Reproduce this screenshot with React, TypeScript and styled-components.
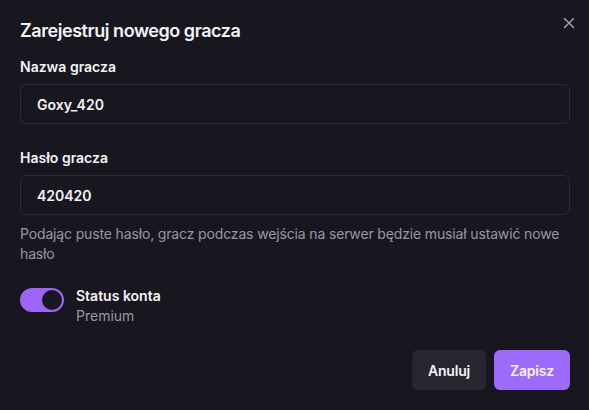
import styled, { createGlobalStyle } from "styled-components";

const GlobalStyle = createGlobalStyle`
    html, body {
        margin: 0;
        padding: 0;
        background: #18171f;
    }
    * {
        box-sizing: border-box;
    }
`;

const Dialog = styled.div`
    position: relative;
    width: 589px;
    height: 410px;
    background: #18171f;
    font-family: Inter, "Noto Sans", sans-serif;
    color: #f4f4f6;
    padding: 19px 19px 20px 20px;
    display: flex;
    flex-direction: column;
`;

const Title = styled.h2`
    margin: 0;
    font-size: 18px;
    font-weight: 600;
    line-height: 24px;
    letter-spacing: -0.45px;
`;

const CloseButton = styled.button`
    position: absolute;
    top: 15px;
    right: 12px;
    width: 16px;
    height: 16px;
    padding: 0;
    border: none;
    background: transparent;
    color: #a9a8b2;
    display: flex;
    align-items: center;
    justify-content: center;
`;

const Field = styled.div<{ $top: number }>`
    display: flex;
    flex-direction: column;
    margin-top: ${(p) => p.$top}px;
`;

const Label = styled.label`
    font-size: 14px;
    font-weight: 600;
    line-height: 20px;
    margin-bottom: 7px;
`;

const Input = styled.input`
    height: 40px;
    width: 100%;
    background: #18171f;
    border: 1px solid #2b2a36;
    border-radius: 6px;
    padding: 0 16px;
    color: #f4f4f6;
    font-family: inherit;
    font-size: 14px;
    font-weight: 600;
    outline: none;
`;

const Hint = styled.p`
    margin: 9px 0 0;
    font-size: 14px;
    line-height: 20px;
    letter-spacing: -0.15px;
    color: #9896a6;
`;

const SwitchRow = styled.div`
    display: flex;
    align-items: flex-start;
    gap: 12px;
    margin-top: 24px;
`;

const Switch = styled.div<{ $on: boolean }>`
    width: 44px;
    height: 24px;
    border-radius: 12px;
    background: ${(p) => (p.$on ? "#9b65f7" : "#2b2a36")};
    padding: 2px;
    display: flex;
    justify-content: ${(p) => (p.$on ? "flex-end" : "flex-start")};
`;

const Knob = styled.span`
    width: 20px;
    height: 20px;
    border-radius: 50%;
    background: #18171f;
`;

const SwitchText = styled.div`
    display: flex;
    flex-direction: column;
    margin-top: -2px;
`;

const SwitchTitle = styled.span`
    font-size: 14px;
    font-weight: 600;
    line-height: 20px;
`;

const SwitchSub = styled.span`
    font-size: 14px;
    line-height: 20px;
    color: #9896a6;
`;

const Footer = styled.div`
    margin-top: auto;
    display: flex;
    justify-content: flex-end;
    gap: 8px;
`;

const Button = styled.button<{ $primary?: boolean }>`
    height: 40px;
    padding: 0 16px;
    border: none;
    border-radius: 6px;
    font-family: inherit;
    font-size: 14px;
    font-weight: 600;
    letter-spacing: -0.2px;
    color: #f4f4f6;
    background: ${(p) => (p.$primary ? "#9d6bfb" : "#272631")};
`;

export default function App() {
    return (
        <>
            <GlobalStyle />
            <Dialog>
                <Title>Zarejestruj nowego gracza</Title>
                <CloseButton aria-label="close">
                    <svg width="12" height="12" viewBox="0 0 12 12" fill="none" stroke="currentColor" strokeWidth="1.4" strokeLinecap="round">
                        <path d="M1.5 1.5l9 9M10.5 1.5l-9 9" />
                    </svg>
                </CloseButton>
                <Field $top={14}>
                    <Label>Nazwa gracza</Label>
                    <Input defaultValue="Goxy_420" />
                </Field>
                <Field $top={24}>
                    <Label>Hasło gracza</Label>
                    <Input defaultValue="420420" />
                </Field>
                <Hint>Podając puste hasło, gracz podczas wejścia na serwer będzie musiał ustawić nowe hasło</Hint>
                <SwitchRow>
                    <Switch $on>
                        <Knob />
                    </Switch>
                    <SwitchText>
                        <SwitchTitle>Status konta</SwitchTitle>
                        <SwitchSub>Premium</SwitchSub>
                    </SwitchText>
                </SwitchRow>
                <Footer>
                    <Button>Anuluj</Button>
                    <Button $primary>Zapisz</Button>
                </Footer>
            </Dialog>
        </>
    );
}
